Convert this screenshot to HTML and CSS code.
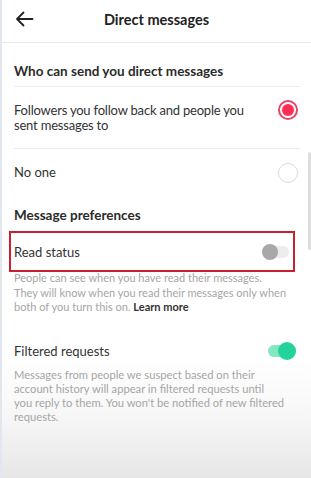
FILE: index.html
```html
<!DOCTYPE html>
<html>
<head>
<meta charset="utf-8">
<link rel="stylesheet" href="styles.css">
</head>
<body>
<div class="screen">
  <header class="topbar">
    <svg class="back" width="19" height="16" viewBox="0 0 19 16"><path d="M17.5 8H2M8.5 1.5L2 8l6.5 6.5" fill="none" stroke="#222" stroke-width="1.8" stroke-linecap="round" stroke-linejoin="round"/></svg>
    <h1 class="title">Direct messages</h1>
  </header>
  <main class="content">
    <h2 class="section">Who can send you direct messages</h2>
    <div class="option first">
      <span class="opt-text">Followers you follow back and people you sent messages to</span>
      <span class="radio on"></span>
    </div>
    <div class="option second">
      <span class="opt-text">No one</span>
      <span class="radio"></span>
    </div>
    <h2 class="section pref">Message preferences</h2>
    <div class="setting read">
      <div class="row highlight">
        <span class="opt-text">Read status</span>
        <span class="toggle off"><span class="knob"></span></span>
      </div>
      <p class="desc">People can see when you have read their messages.<br>They will know when you read their messages only when both of you turn this on. <b>Learn more</b></p>
    </div>
    <div class="setting filtered">
      <div class="row">
        <span class="opt-text">Filtered requests</span>
        <span class="toggle on"><span class="knob"></span></span>
      </div>
      <p class="desc">Messages from people we suspect based on their account history will appear in filtered requests until<br>you reply to them. You won't be notified of new filtered requests.</p>
    </div>
  </main>
  <div class="scrollbar"></div>
</div>
</body>
</html>
```
FILE: styles.css
```css
* { box-sizing: border-box; }
html, body { margin: 0; padding: 0; }
body {
  width: 311px;
  height: 478px;
  overflow: hidden;
  font-family: "Lato", "Liberation Sans", sans-serif;
  color: #2a2a2a;
}
.screen {
  position: relative;
  width: 311px;
  height: 478px;
  background: linear-gradient(to bottom, #fff 0, #fff 360px, #f6f6f6 420px, #e6e6e6 478px);
  border-left: 2px solid #e2e6ee;
}
.topbar {
  height: 43px;
  border-bottom: 1px solid #e8e8e8;
  display: flex;
  align-items: center;
  justify-content: center;
  position: relative;
}
.back { position: absolute; left: 13px; top: 11px; }
.title {
  margin: 0 0 3px;
  font-size: 14.5px;
  font-weight: 700;
  color: #222;
}
.content { padding: 0 11px 0 12px; }
.section {
  margin: 0;
  font-size: 13.5px;
  line-height: 16px;
  font-weight: 700;
  color: #2b2b2b;
  padding: 20px 0 7px;
  border-bottom: 1px solid #ececec;
}
.section.pref { border-bottom: none; padding: 11px 0 0; }
.option {
  display: flex;
  align-items: center;
  justify-content: space-between;
  font-size: 13px;
  line-height: 15px;
  color: #333;
}
.option.first {
  height: 62px;
  border-bottom: 1px solid #ececec;
}
.option.first .opt-text { width: 256px; letter-spacing: -0.2px; }
.option.first .radio { align-self: flex-start; margin-top: 13px; }
.option.second { height: 47px; }
.radio {
  width: 20px; height: 20px;
  border-radius: 50%;
  border: 1px solid #dcdcdc;
  flex: none;
  margin-right: 2px;
}
.radio.on {
  border: 2px solid #e84466;
  background: #fe2c55;
  padding: 2px;
  background-clip: content-box;
}
.row {
  display: flex;
  align-items: center;
  justify-content: space-between;
  font-size: 13px;
  color: #333;
}
.highlight {
  position: relative;
  z-index: 1;
  height: 41px;
  margin: 8px 5px 0 -5px;
  padding: 0 4px 0 3px;
  border: 2px solid #c8202e;
}
.toggle {
  position: relative;
  height: 12px;
  border-radius: 6px;
  flex: none;
}
.toggle .knob {
  position: absolute;
  border-radius: 50%;
}
.toggle.off { width: 27px; background: #ececec; }
.toggle.off .knob { left: 0; top: -2px; width: 16px; height: 16px; background: #a8a8a8; }
.toggle.on { width: 28px; background: #86e6c2; margin-right: 4px; }
.toggle.on .knob { right: 0; top: -3px; width: 18px; height: 18px; background: #22d49b; }
.desc {
  margin: 0;
  font-size: 11.2px;
  color: #a6a6a6;
}
.read .desc { margin-top: -1px; line-height: 14.5px; font-size: 11px; }
.desc b { color: #333; font-weight: 700; }
.filtered { margin-top: 26px; }
.filtered .row { height: 20px; }
.filtered .desc { margin-top: 7px; line-height: 14.3px; padding-right: 8px; }
.scrollbar {
  position: absolute;
  right: 0;
  top: 152px;
  width: 3px;
  height: 98px;
  background: #dedede;
  border-radius: 2px;
}
```
